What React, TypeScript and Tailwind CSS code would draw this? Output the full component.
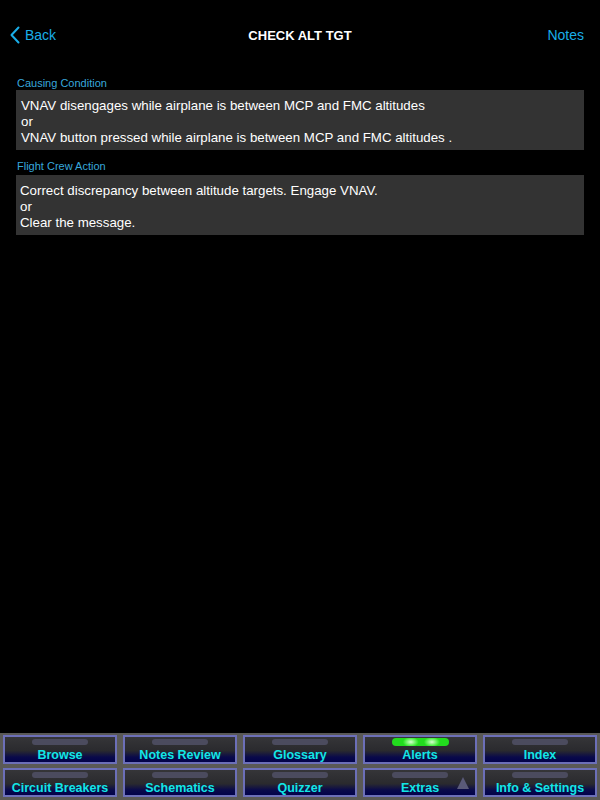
const rows = [
  ["Browse", "Notes Review", "Glossary", "Alerts", "Index"],
  ["Circuit Breakers", "Schematics", "Quizzer", "Extras", "Info & Settings"],
];

function ToolButton({ label }: { label: string }) {
  const active = label === "Alerts";
  return (
    <div className="relative h-[29px] w-[114px] border-2 border-[#6c6fb8] bg-[linear-gradient(to_bottom,#353538_0%,#2a2a2e_55%,#0a0a4a_80%,#02024a_100%)] flex flex-col items-center">
      {active ? (
        <div className="mt-[1px] h-[8px] w-[57px] rounded-full bg-[radial-gradient(ellipse_8px_5px_at_33%_50%,#d8ffd0_0,#52f04a_70%,transparent_100%),radial-gradient(ellipse_8px_5px_at_70%_50%,#d8ffd0_0,#52f04a_70%,transparent_100%),linear-gradient(#22dc1e,#22dc1e)]" />
      ) : (
        <div className="mt-[2px] h-[6px] w-[56px] rounded-full bg-[#4b4b5e]" />
      )}
      <span className="mt-auto text-[12.5px] leading-[14px] font-bold text-[#12e6e6] whitespace-nowrap">
        {label}
      </span>
      {label === "Extras" && (
        <div className="absolute right-[6px] top-[7px] w-0 h-0 border-l-[6px] border-r-[6px] border-b-[12px] border-l-transparent border-r-transparent border-b-[#5a5a78]" />
      )}
    </div>
  );
}

export default function App() {
  return (
    <div
      className="w-[600px] h-[800px] bg-black flex flex-col text-white"
      style={{ fontFamily: '"Liberation Sans", Arial, sans-serif' }}
    >
      <div className="h-[76px] flex items-start pt-[26px] px-[10px] relative">
        <div className="flex items-center text-[#1aaee8] text-[14px] leading-[20px] -mt-[1px]">
          <svg width="10" height="18" viewBox="0 0 10 18" fill="none">
            <path d="M8.5 1.5 L1.5 9 L8.5 16.5" stroke="#1aaee8" strokeWidth="2" strokeLinecap="round" strokeLinejoin="round" />
          </svg>
          <span className="ml-[5px]">Back</span>
        </div>
        <div className="absolute left-0 right-0 top-[26px] text-center text-[13px] leading-[20px] font-bold">
          CHECK ALT TGT
        </div>
        <div className="ml-auto mr-[6px] -mt-[1px] text-[#1aaee8] text-[14px] leading-[20px]">Notes</div>
      </div>

      <div className="px-[16px] flex flex-col">
        <div className="text-[11px] leading-[14px] text-[#38a8dc] pl-[1px]">Causing Condition</div>
        <div className="w-[568px] bg-[#333333] px-[5px] pt-[8px] pb-[4px] text-[13.3px] leading-[16px]">
          <div>VNAV disengages while airplane is between MCP and FMC altitudes</div>
          <div>or</div>
          <div>VNAV button pressed while airplane is between MCP and FMC altitudes .</div>
        </div>
        <div className="text-[11px] leading-[14px] text-[#38a8dc] pl-[1px] mt-[9px] mb-[2px]">Flight Crew Action</div>
        <div className="w-[568px] bg-[#333333] px-[4px] pt-[8px] pb-[4px] text-[13.3px] leading-[16px]">
          <div>Correct discrepancy between altitude targets. Engage VNAV.</div>
          <div>or</div>
          <div>Clear the message.</div>
        </div>
      </div>

      <div className="mt-auto h-[67px] bg-[#5a5956] pt-[2px] px-[3px] flex flex-col gap-[4px]">
        {rows.map((row, i) => (
          <div key={i} className="flex gap-[6px]">
            {row.map((l) => (
              <ToolButton key={l} label={l} />
            ))}
          </div>
        ))}
      </div>
    </div>
  );
}
